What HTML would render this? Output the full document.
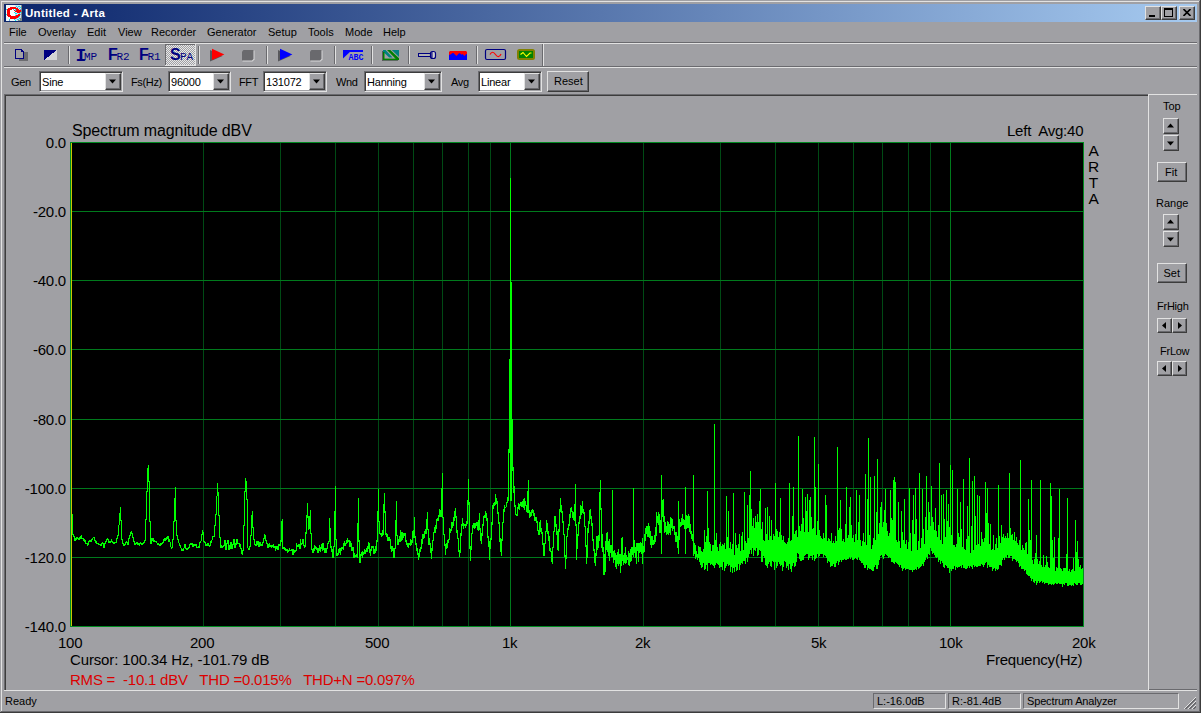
<!DOCTYPE html>
<html><head><meta charset="utf-8"><title>Untitled - Arta</title>
<style>
html,body{margin:0;padding:0}
body{width:1201px;height:713px;overflow:hidden;background:#a0a0a4;position:relative;font-family:"Liberation Sans",sans-serif;font-size:11px;color:#000}
.abs{position:absolute}
.t{position:absolute;white-space:pre;line-height:1}
.hl{position:absolute;height:1px}
.vl{position:absolute;width:1px}
.L{background:#e2e2e2}.S{background:#6a6a6e}.D{background:#3c3c3c}
.btn{position:absolute;background:#a0a0a4;box-sizing:border-box;border:1px solid;border-color:#e2e2e2 #3c3c3c #3c3c3c #e2e2e2;box-shadow:inset -1px -1px 0 #6a6a6e}
.btn span{position:absolute;white-space:pre;line-height:1}
.combo{position:absolute;height:21px;box-sizing:border-box;background:#fff;border:1px solid;border-color:#6a6a6e #e2e2e2 #e2e2e2 #6a6a6e;box-shadow:inset 1px 1px 0 #3c3c3c, inset -1px -1px 0 #a0a0a4}
.combo span{position:absolute;left:2px;top:4.5px;line-height:1;white-space:pre;letter-spacing:-0.2px}
.combo .dd{position:absolute;right:1px;top:1px;width:16px;height:17px}
.pl{font-size:15px;letter-spacing:-0.22px;color:#000}
.menu{top:27px}
</style></head><body>
<!-- window frame -->
<div class="vl L" style="left:1px;top:1px;height:710px"></div>
<div class="hl L" style="left:1px;top:1px;width:1198px"></div>
<div class="vl S" style="left:1199px;top:1px;height:711px"></div>
<div class="hl S" style="left:1px;top:711px;width:1199px"></div>
<div class="vl D" style="left:1200px;top:0;height:713px"></div>
<div class="hl D" style="left:0;top:712px;width:1201px"></div>
<!-- title bar -->
<div class="abs" style="left:4px;top:4px;width:1193px;height:18px;background:linear-gradient(90deg,#0a246a,#a6caf0)"></div>
<svg class="abs" style="left:6px;top:5px" width="16" height="16" viewBox="0 0 16 16" shape-rendering="crispEdges">
<rect width="16" height="16" fill="#eef6fa"/>
<rect x="9" y="0" width="7" height="16" fill="#cfe3ee"/>
<g fill="#7c8a86"><rect x="15" y="0" width="1" height="1"/><rect x="15" y="1" width="1" height="1"/><rect x="15" y="2" width="1" height="1"/><rect x="15" y="3" width="1" height="1"/><rect x="15" y="4" width="1" height="1"/><rect x="15" y="5" width="1" height="1"/><rect x="15" y="6" width="1" height="1"/><rect x="15" y="7" width="1" height="1"/><rect x="15" y="8" width="1" height="1"/><rect x="15" y="9" width="1" height="1"/><rect x="15" y="10" width="1" height="1"/><rect x="15" y="11" width="1" height="1"/><rect x="15" y="12" width="1" height="1"/><rect x="15" y="13" width="1" height="1"/><rect x="15" y="14" width="1" height="1"/><rect x="15" y="15" width="1" height="1"/><rect x="14" y="14" width="1" height="1"/><rect x="13" y="15" width="1" height="1"/><rect x="14" y="15" width="1" height="1"/><rect x="12" y="15" width="1" height="1"/><rect x="14" y="13" width="1" height="1"/></g>
<g fill="#6aa0d8"><rect x="11" y="2" width="1" height="1"/><rect x="13" y="5" width="1" height="1"/><rect x="14" y="9" width="1" height="1"/><rect x="13" y="13" width="1" height="1"/><rect x="11" y="14" width="1" height="1"/><rect x="3" y="15" width="1" height="1"/><rect x="14" y="4" width="1" height="1"/><rect x="13" y="1" width="1" height="1"/><rect x="10" y="13" width="1" height="1"/></g>
<g fill="#00f0f8"><rect x="10" y="1" width="1" height="1"/><rect x="12" y="1" width="1" height="1"/><rect x="13" y="3" width="1" height="1"/><rect x="12" y="4" width="1" height="1"/><rect x="9" y="4" width="1" height="1"/><rect x="7" y="4" width="1" height="1"/><rect x="8" y="6" width="1" height="1"/><rect x="9" y="8" width="1" height="1"/><rect x="10" y="8" width="1" height="1"/><rect x="8" y="10" width="1" height="1"/><rect x="9" y="10" width="1" height="1"/><rect x="14" y="7" width="1" height="1"/><rect x="13" y="8" width="1" height="1"/><rect x="12" y="12" width="1" height="1"/><rect x="13" y="11" width="1" height="1"/><rect x="8" y="14" width="1" height="1"/><rect x="9" y="15" width="1" height="1"/><rect x="12" y="14" width="1" height="1"/><rect x="3" y="14" width="1" height="1"/><rect x="0" y="4" width="1" height="1"/><rect x="0" y="9" width="1" height="1"/><rect x="14" y="2" width="1" height="1"/></g>
<rect x="4" y="4" width="5" height="8" fill="#ffffff"/>
<g fill="#ff0000"><rect x="4" y="2" width="6" height="1"/><rect x="2" y="3" width="10" height="1"/><rect x="1" y="4" width="5" height="1"/><rect x="10" y="4" width="3" height="1"/><rect x="1" y="5" width="3" height="1"/><rect x="8" y="5" width="7" height="1"/><rect x="1" y="6" width="3" height="1"/><rect x="9" y="6" width="6" height="1"/><rect x="1" y="7" width="3" height="1"/><rect x="11" y="7" width="3" height="1"/><rect x="1" y="8" width="3" height="1"/><rect x="1" y="9" width="3" height="1"/><rect x="12" y="9" width="2" height="1"/><rect x="1" y="10" width="4" height="1"/><rect x="10" y="10" width="4" height="1"/><rect x="2" y="11" width="11" height="1"/><rect x="4" y="12" width="8" height="1"/><rect x="4" y="13" width="6" height="1"/></g>
<g fill="#00f0f8"><rect x="7" y="4" width="1" height="1"/><rect x="9" y="5" width="1" height="1"/><rect x="8" y="7" width="1" height="1"/><rect x="10" y="8" width="1" height="1"/><rect x="9" y="10" width="1" height="1"/></g>
</svg>
<div class="t" style="left:25px;top:8px;font-size:11.5px;font-weight:bold;color:#fff;letter-spacing:0.3px">Untitled - Arta</div>
<!-- caption buttons -->
<div class="btn" style="left:1145px;top:6px;width:16px;height:14px"><div class="abs" style="left:3px;top:8px;width:6px;height:2px;background:#000"></div></div>
<div class="btn" style="left:1161px;top:6px;width:16px;height:14px"><div class="abs" style="left:2px;top:1px;width:9px;height:9px;box-sizing:border-box;border:1px solid #000;border-top-width:2px"></div></div>
<div class="btn" style="left:1179px;top:6px;width:16px;height:14px"><svg class="abs" style="left:3px;top:2px" width="8" height="7" viewBox="0 0 8 7"><path d="M0.5 0 L7.5 7 M7.5 0 L0.5 7" stroke="#000" stroke-width="1.6" fill="none"/></svg></div>
<!-- menu -->
<div class="t menu" style="left:9px">File</div>
<div class="t menu" style="left:38px">Overlay</div>
<div class="t menu" style="left:87px">Edit</div>
<div class="t menu" style="left:118px">View</div>
<div class="t menu" style="left:151px">Recorder</div>
<div class="t menu" style="left:207px">Generator</div>
<div class="t menu" style="left:268px">Setup</div>
<div class="t menu" style="left:308px">Tools</div>
<div class="t menu" style="left:345px">Mode</div>
<div class="t menu" style="left:383px">Help</div>
<div class="hl S" style="left:4px;top:42px;width:1193px"></div>
<div class="hl L" style="left:4px;top:43px;width:1193px"></div>
<svg class="abs" style="left:0;top:44px" width="560" height="22" viewBox="0 44 560 22" shape-rendering="crispEdges">
<!-- separators -->
<g fill="#6a6a6e"><rect x="68" y="46" width="1" height="18"/><rect x="198" y="46" width="1" height="18"/><rect x="266" y="46" width="1" height="18"/><rect x="334" y="46" width="1" height="18"/><rect x="371" y="46" width="1" height="18"/><rect x="408" y="46" width="1" height="18"/><rect x="476" y="46" width="1" height="18"/><rect x="542" y="44" width="1" height="22"/></g>
<g fill="#e2e2e2"><rect x="69" y="46" width="1" height="18"/><rect x="199" y="46" width="1" height="18"/><rect x="267" y="46" width="1" height="18"/><rect x="335" y="46" width="1" height="18"/><rect x="372" y="46" width="1" height="18"/><rect x="409" y="46" width="1" height="18"/><rect x="477" y="46" width="1" height="18"/><rect x="543" y="44" width="1" height="22"/></g>
<!-- icon1: page with shadow -->
<rect x="19" y="52" width="9" height="9" fill="#6c6c70"/>
<path d="M15.5 49.5 H21.5 L23.5 51.5 V58.5 H15.5 Z" fill="#a0a0a4" stroke="#000080" stroke-width="1"/>
<path d="M21.5 49.5 V51.5 H23.5" fill="none" stroke="#000080" stroke-width="1"/>
<!-- icon2 -->
<path d="M44 50 H57 L44 60 Z" fill="#000080"/><path d="M57 50 V60 H44 Z" fill="#d4d4d6"/>
<!-- SPA pressed -->
<defs><pattern id="chk" width="2" height="2" patternUnits="userSpaceOnUse"><rect width="2" height="2" fill="#a0a0a4"/><rect width="1" height="1" fill="#e8e8e8"/><rect x="1" y="1" width="1" height="1" fill="#e8e8e8"/></pattern></defs><rect x="166" y="45" width="29" height="20" fill="url(#chk)"/>
<rect x="165" y="44" width="31" height="1" fill="#6a6a6e"/><rect x="165" y="44" width="1" height="22" fill="#6a6a6e"/>
<rect x="195" y="44" width="1" height="22" fill="#e2e2e2"/><rect x="165" y="65" width="31" height="1" fill="#e2e2e2"/>
<!-- red play -->
<path d="M210 50 L222.5 56 L210 61.5 Z" fill="#58585c" shape-rendering="auto"/>
<path d="M212 48.8 L224.4 54.5 L212 60 Z" fill="#ff0000" shape-rendering="auto"/>
<!-- stop 1 -->
<path d="M244 50.5 H254.5 V59.5 L252.5 61.5 H242.5 V52 Z" fill="#d8d8da" shape-rendering="auto"/>
<path d="M243.5 50 H253.5 V59 L252 60.5 H242 V51.5 Z" fill="#69696d" shape-rendering="auto"/>
<!-- blue play -->
<path d="M278 50 L290.5 56 L278 61.5 Z" fill="#58585c" shape-rendering="auto"/>
<path d="M280 48.8 L292.4 54.5 L280 60 Z" fill="#0000ff" shape-rendering="auto"/>
<!-- stop 2 -->
<path d="M312 50.5 H322.5 V59.5 L320.5 61.5 H310.5 V52 Z" fill="#d8d8da" shape-rendering="auto"/>
<path d="M311.5 50 H321.5 V59 L320 60.5 H310 V51.5 Z" fill="#69696d" shape-rendering="auto"/>
<!-- ABC -->
<rect x="343" y="50" width="20" height="2" fill="#0000ff"/><path d="M343 50 H352 L343 58.5 Z" fill="#0000ff" shape-rendering="auto"/>
<text x="348.5" y="60" font-family="Liberation Mono, monospace" font-weight="bold" font-size="8.6" fill="#0000ff" textLength="15" lengthAdjust="spacingAndGlyphs" shape-rendering="auto">ABC</text>
<!-- green triangle icon -->
<g shape-rendering="auto">
<rect x="382" y="51" width="1.2" height="10" fill="#5a5a5e"/><rect x="382" y="60" width="16" height="0.8" fill="#5a5a5e"/>
<path d="M391.8 50 H399 V57 Z" fill="#008080"/>
<path d="M387 50 H390.3 L399 58.2 V60 H396.8 Z" fill="#008000"/>
<path d="M383 50 H385.6 L392.6 57.6 H389.2 L383 51.8 Z" fill="#008080"/>
<rect x="383" y="52" width="1.5" height="8" fill="#008000"/><rect x="383" y="58.6" width="14.5" height="1.5" fill="#008000"/>
</g>
<!-- flashlight -->
<rect x="418.5" y="53.5" width="12" height="3" fill="#b4b4b0" stroke="#000080" stroke-width="1"/>
<rect x="430.5" y="51.5" width="5" height="7" rx="2" fill="#d0d0cc" stroke="#000080" stroke-width="1.2" shape-rendering="auto"/>
<rect x="431.3" y="52" width="1.2" height="6" fill="#000080" shape-rendering="auto"/>
<!-- red/blue -->
<path d="M449 52 L450 51 H466 L467 52 V56 H449 Z" fill="#ff0000" shape-rendering="auto"/>
<path d="M449 55 L450.5 54.5 L452.5 53 L453.5 53 L456.5 56 L459 53.2 L460 53.2 L461.5 54.8 L462.5 54 L464.5 56 L466 54.2 L467 54 V60 H449 Z" fill="#0000ff" shape-rendering="auto"/>
<!-- red sine -->
<rect x="485.5" y="49.5" width="20" height="10" rx="1.5" fill="#a0a0a4" stroke="#000080" stroke-width="1.2" shape-rendering="auto"/>
<path d="M490 54.5 C491.5 51.5 493.5 51.5 495.5 54.5 S499.5 57.5 501 54" fill="none" stroke="#ff0000" stroke-width="1.2" shape-rendering="auto"/>
<!-- green scope -->
<rect x="517" y="49" width="18" height="11" rx="2.5" fill="#808000" shape-rendering="auto"/>
<rect x="519" y="51" width="14" height="7" fill="#008000"/>
<path d="M520.5 54.5 L523 52.5 L526.5 56.5 L530 53 L531.5 53" fill="none" stroke="#ffff00" stroke-width="1.1" shape-rendering="auto"/>
</svg>
<div class="t" style="left:75.5px;top:46.5px;font-family:'Liberation Mono',monospace;font-weight:bold;font-size:18px;color:#000080;width:7px;overflow:visible;letter-spacing:-3px">I</div>
<div class="t" style="left:84px;top:51.5px;font-family:'Liberation Mono',monospace;font-size:11px;color:#000080;letter-spacing:0px">MP</div>
<div class="t" style="left:108px;top:47px;font-weight:bold;font-size:16px;color:#000080">F</div>
<div class="t" style="left:116.5px;top:51.5px;font-family:'Liberation Mono',monospace;font-size:11px;color:#000080;letter-spacing:0px">R2</div>
<div class="t" style="left:139px;top:47px;font-weight:bold;font-size:16px;color:#000080">F</div>
<div class="t" style="left:147.5px;top:51.5px;font-family:'Liberation Mono',monospace;font-size:11px;color:#000080;letter-spacing:0px">R1</div>
<div class="t" style="left:170px;top:46.5px;font-weight:bold;font-size:16px;color:#000080">S</div>
<div class="t" style="left:180px;top:52px;font-family:'Liberation Mono',monospace;font-size:11px;color:#000080;letter-spacing:0px">PA</div>

<div class="hl S" style="left:4px;top:66px;width:1193px"></div>
<div class="hl L" style="left:4px;top:67px;width:1193px"></div>
<div class="t" style="left:11px;top:76.5px;letter-spacing:-0.35px">Gen</div>
<div class="combo" style="left:39px;top:71px;width:84px"><span>Sine</span><div class="btn dd"><svg class="abs" style="left:3px;top:5px" width="8" height="5"><path d="M0 0.5 L7 0.5 L3.5 4.5Z" fill="#000"/></svg></div></div>
<div class="t" style="left:131px;top:76.5px;letter-spacing:-0.35px">Fs(Hz)</div>
<div class="combo" style="left:168px;top:71px;width:63px"><span>96000</span><div class="btn dd"><svg class="abs" style="left:3px;top:5px" width="8" height="5"><path d="M0 0.5 L7 0.5 L3.5 4.5Z" fill="#000"/></svg></div></div>
<div class="t" style="left:239px;top:76.5px;letter-spacing:-0.35px">FFT</div>
<div class="combo" style="left:263px;top:71px;width:64px"><span>131072</span><div class="btn dd"><svg class="abs" style="left:3px;top:5px" width="8" height="5"><path d="M0 0.5 L7 0.5 L3.5 4.5Z" fill="#000"/></svg></div></div>
<div class="t" style="left:336px;top:76.5px;letter-spacing:-0.35px">Wnd</div>
<div class="combo" style="left:364px;top:71px;width:78px"><span>Hanning</span><div class="btn dd"><svg class="abs" style="left:3px;top:5px" width="8" height="5"><path d="M0 0.5 L7 0.5 L3.5 4.5Z" fill="#000"/></svg></div></div>
<div class="t" style="left:451px;top:76.5px;letter-spacing:-0.35px">Avg</div>
<div class="combo" style="left:478px;top:71px;width:64px"><span>Linear</span><div class="btn dd"><svg class="abs" style="left:3px;top:5px" width="8" height="5"><path d="M0 0.5 L7 0.5 L3.5 4.5Z" fill="#000"/></svg></div></div>
<div class="btn" style="left:547px;top:71px;width:42px;height:21px"><span style="left:6px;top:4px">Reset</span></div>

<!-- main sunken panel -->
<div class="hl S" style="left:4px;top:94px;width:1144px"></div>
<div class="hl D" style="left:5px;top:95px;width:1143px"></div>
<div class="vl S" style="left:4px;top:94px;height:597px"></div>
<div class="vl D" style="left:5px;top:95px;height:595px"></div>
<div class="vl L" style="left:1148px;top:94px;height:597px"></div>
<div class="hl L" style="left:4px;top:690px;width:1193px"></div>
<div class="hl L" style="left:1149px;top:94px;width:48px"></div>
<div class="hl S" style="left:1149px;top:689px;width:48px"></div>
<svg class="abs" style="left:0;top:0" width="1201" height="713" shape-rendering="crispEdges">
<rect x="70" y="142" width="1014" height="485" fill="#008a20"/>
<rect x="71" y="143" width="1012" height="483" fill="#000"/>
<rect x="203" y="143" width="1" height="483" fill="#004a14"/><rect x="280" y="143" width="1" height="483" fill="#004a14"/><rect x="335" y="143" width="1" height="483" fill="#004a14"/><rect x="378" y="143" width="1" height="483" fill="#004a14"/><rect x="413" y="143" width="1" height="483" fill="#004a14"/><rect x="442" y="143" width="1" height="483" fill="#004a14"/><rect x="468" y="143" width="1" height="483" fill="#004a14"/><rect x="490" y="143" width="1" height="483" fill="#004a14"/><rect x="510" y="143" width="1" height="483" fill="#007a1c"/><rect x="643" y="143" width="1" height="483" fill="#004a14"/><rect x="720" y="143" width="1" height="483" fill="#004a14"/><rect x="775" y="143" width="1" height="483" fill="#004a14"/><rect x="818" y="143" width="1" height="483" fill="#004a14"/><rect x="853" y="143" width="1" height="483" fill="#004a14"/><rect x="882" y="143" width="1" height="483" fill="#004a14"/><rect x="908" y="143" width="1" height="483" fill="#004a14"/><rect x="930" y="143" width="1" height="483" fill="#004a14"/><rect x="950" y="143" width="1" height="483" fill="#007a1c"/><rect x="72" y="211" width="1011" height="1" fill="#007a1c"/><rect x="72" y="280" width="1011" height="1" fill="#007a1c"/><rect x="72" y="349" width="1011" height="1" fill="#007a1c"/><rect x="72" y="419" width="1011" height="1" fill="#007a1c"/><rect x="72" y="488" width="1011" height="1" fill="#007a1c"/><rect x="72" y="557" width="1011" height="1" fill="#007a1c"/>
<rect x="71" y="143" width="1" height="483" fill="#c8c800"/>
<path d="M72.5 514.4V534.9M73.5 534.0V537.3M74.5 536.4V540.9M75.5 537.8V540.9M76.5 536.5V540.2M77.5 536.5V539.3M78.5 538.3V539.7M79.5 537.1V539.7M80.5 536.2V538.8M81.5 535.3V539.2M82.5 537.6V539.2M83.5 537.7V541.3M84.5 539.1V541.6M85.5 539.8V544.1M86.5 542.7V544.1M87.5 543.1V546.1M88.5 541.3V545.3M89.5 540.0V542.4M90.5 540.0V542.4M91.5 538.7V542.0M92.5 537.5V539.9M93.5 537.0V538.4M94.5 537.0V540.9M95.5 540.0V543.0M96.5 541.1V544.4M97.5 542.7V544.4M98.5 543.1V544.8M99.5 543.9V545.2M100.5 543.9V546.0M101.5 543.4V545.9M102.5 541.8V544.3M103.5 542.9V547.6M104.5 543.0V547.6M105.5 540.8V543.9M106.5 538.6V541.7M107.5 538.4V540.3M108.5 539.4V542.8M109.5 541.2V543.2M110.5 540.8V543.2M111.5 539.1V541.7M112.5 540.5V542.7M113.5 541.5V543.7M114.5 541.8V543.7M115.5 541.8V543.4M116.5 538.4V543.1M117.5 535.0V539.3M118.5 524.5V535.9M119.5 512.5V525.4M120.5 507.0V520.6M121.5 519.7V540.2M122.5 539.3V543.7M123.5 542.6V546.3M124.5 543.5V546.3M125.5 542.1V545.0M126.5 541.1V543.3M127.5 541.8V544.7M128.5 538.0V544.7M129.5 535.0V538.9M130.5 531.6V535.9M131.5 531.1V533.5M132.5 532.6V538.0M133.5 537.1V542.0M134.5 541.1V545.2M135.5 543.2V545.2M136.5 541.7V544.1M137.5 541.7V544.6M138.5 543.4V544.6M139.5 542.9V545.5M140.5 541.9V544.2M141.5 542.7V544.8M142.5 543.1V544.8M143.5 542.1V544.0M144.5 540.3V543.0M145.5 519.1V541.2M146.5 491.1V520.0M147.5 468.4V492.0M148.5 465.0V482.3M149.5 481.4V521.5M150.5 520.6V543.7M151.5 538.3V543.7M152.5 537.8V540.9M153.5 537.8V541.8M154.5 539.9V542.4M155.5 540.5V542.4M156.5 541.0V543.4M157.5 542.5V544.7M158.5 542.7V544.8M159.5 543.9V546.3M160.5 543.3V546.3M161.5 542.6V545.1M162.5 541.9V543.5M163.5 538.5V542.9M164.5 538.4V540.5M165.5 538.3V540.5M166.5 536.9V539.8M167.5 536.4V539.0M168.5 536.4V541.6M169.5 538.5V542.4M170.5 541.5V547.4M171.5 546.5V548.6M172.5 538.9V547.7M173.5 520.6V539.8M174.5 497.9V521.5M175.5 487.0V520.8M176.5 519.9V535.6M177.5 534.7V539.7M178.5 538.8V543.4M179.5 542.5V545.9M180.5 545.0V548.4M181.5 547.5V550.8M182.5 549.1V550.8M183.5 547.5V550.7M184.5 544.4V548.4M185.5 544.4V548.5M186.5 547.6V549.5M187.5 547.6V549.9M188.5 546.9V548.5M189.5 544.2V547.8M190.5 543.2V545.1M191.5 543.0V544.5M192.5 543.0V547.2M193.5 544.1V547.0M194.5 543.5V546.4M195.5 543.5V545.6M196.5 544.4V547.7M197.5 546.6V547.8M198.5 546.3V547.8M199.5 542.2V547.7M200.5 540.5V543.1M201.5 534.0V541.4M202.5 530.0V534.9M203.5 531.9V542.1M204.5 541.2V543.0M205.5 542.1V545.5M206.5 544.0V546.0M207.5 543.4V545.6M208.5 543.1V545.9M209.5 545.0V547.0M210.5 540.9V546.4M211.5 539.5V543.2M212.5 535.9V540.4M213.5 535.7V536.9M214.5 525.4V536.6M215.5 513.7V526.3M216.5 495.5V514.6M217.5 483.0V496.4M218.5 491.8V515.5M219.5 514.6V537.7M220.5 536.8V547.6M221.5 545.1V547.7M222.5 546.4V548.0M223.5 545.0V547.3M224.5 540.0V545.9M225.5 540.0V550.4M226.5 542.9V550.4M227.5 539.7V543.8M228.5 539.7V550.2M229.5 545.3V550.2M230.5 542.3V548.6M231.5 542.3V549.2M232.5 544.3V549.2M233.5 538.7V545.2M234.5 538.7V547.8M235.5 543.1V547.8M236.5 538.7V545.3M237.5 538.7V544.2M238.5 542.9V544.2M239.5 542.9V546.5M240.5 544.3V549.1M241.5 547.8V553.7M242.5 550.4V555.4M243.5 524.7V551.3M244.5 491.4V525.6M245.5 478.0V492.3M246.5 481.0V500.0M247.5 499.1V548.4M248.5 547.5V549.9M249.5 546.1V549.9M250.5 535.4V547.0M251.5 515.4V536.3M252.5 511.0V528.0M253.5 527.1V539.5M254.5 538.6V544.8M255.5 543.9V545.9M256.5 540.6V545.9M257.5 540.6V545.0M258.5 540.8V546.6M259.5 541.8V546.6M260.5 541.6V546.3M261.5 543.9V546.3M262.5 541.6V545.7M263.5 538.0V542.5M264.5 533.7V538.9M265.5 534.8V540.6M266.5 539.7V543.7M267.5 542.8V548.1M268.5 544.4V548.1M269.5 542.8V547.4M270.5 544.8V547.4M271.5 545.2V547.5M272.5 544.6V547.4M273.5 543.8V548.2M274.5 545.5V548.4M275.5 545.5V550.7M276.5 546.3V549.2M277.5 546.3V549.5M278.5 543.6V549.5M279.5 543.6V545.6M280.5 539.8V545.6M281.5 520.5V541.7M282.5 519.0V549.4M283.5 547.2V549.4M284.5 547.2V549.8M285.5 547.6V551.4M286.5 549.3V551.0M287.5 549.3V552.7M288.5 549.8V551.5M289.5 547.9V551.2M290.5 549.8V550.9M291.5 549.1V550.9M292.5 549.3V555.2M293.5 549.3V555.2M294.5 549.7V552.8M295.5 549.9V552.0M296.5 542.9V551.3M297.5 544.9V547.1M298.5 544.2V546.7M299.5 544.2V549.0M300.5 539.2V549.0M301.5 542.9V545.1M302.5 539.2V543.9M303.5 539.4V546.4M304.5 545.2V548.1M305.5 531.9V547.2M306.5 514.8V533.5M307.5 502.9V517.8M308.5 516.3V529.8M309.5 515.8V529.0M310.5 509.7V533.9M311.5 532.7V550.3M312.5 548.8V553.4M313.5 548.4V552.7M314.5 545.4V551.4M315.5 545.7V548.9M316.5 547.3V550.3M317.5 548.0V552.8M318.5 547.6V552.5M319.5 545.2V550.6M320.5 547.1V551.5M321.5 544.4V548.9M322.5 542.9V551.3M323.5 543.2V550.1M324.5 548.2V553.0M325.5 547.6V553.1M326.5 548.3V552.5M327.5 542.6V549.4M328.5 540.8V544.0M329.5 518.0V542.4M330.5 528.3V547.6M331.5 546.2V551.5M332.5 549.2V557.6M333.5 545.5V557.5M334.5 510.7V547.3M335.5 485.9V540.3M336.5 538.8V555.6M337.5 553.1V555.9M338.5 549.1V554.5M339.5 548.0V553.0M340.5 548.4V554.5M341.5 546.6V551.1M342.5 546.6V548.9M343.5 542.7V549.9M344.5 540.7V546.0M345.5 542.9V546.3M346.5 540.3V544.1M347.5 537.6V542.9M348.5 539.8V542.0M349.5 539.7V546.6M350.5 540.7V546.5M351.5 543.2V551.0M352.5 547.0V551.0M353.5 546.8V558.0M354.5 552.7V557.9M355.5 554.5V556.9M356.5 553.8V557.1M357.5 523.4V557.8M358.5 497.9V541.6M359.5 540.4V562.7M360.5 554.3V563.1M361.5 551.9V555.6M362.5 551.2V557.6M363.5 551.5V555.4M364.5 548.5V553.7M365.5 550.0V554.2M366.5 548.3V551.7M367.5 546.4V551.6M368.5 542.0V549.3M369.5 542.6V553.3M370.5 548.9V555.8M371.5 546.2V550.7M372.5 545.6V548.3M373.5 546.2V553.5M374.5 548.8V554.4M375.5 545.8V552.9M376.5 540.3V550.6M377.5 511.4V542.1M378.5 488.6V522.0M379.5 520.6V534.2M380.5 533.2V534.8M381.5 533.2V536.5M382.5 530.1V536.2M383.5 503.8V535.4M384.5 492.5V513.1M385.5 511.0V535.2M386.5 533.4V537.3M387.5 533.9V540.6M388.5 536.8V541.1M389.5 536.9V541.4M390.5 539.3V548.8M391.5 546.4V551.6M392.5 545.8V550.6M393.5 547.7V557.8M394.5 548.2V557.9M395.5 520.1V549.3M396.5 500.7V535.8M397.5 534.6V545.0M398.5 539.1V544.7M399.5 535.6V542.4M400.5 530.3V542.3M401.5 531.5V540.9M402.5 531.9V540.3M403.5 532.5V537.6M404.5 533.3V535.5M405.5 533.2V541.5M406.5 540.3V545.1M407.5 542.9V546.7M408.5 542.5V547.5M409.5 542.7V545.1M410.5 539.4V545.7M411.5 539.7V545.4M412.5 531.0V542.8M413.5 530.3V537.7M414.5 516.6V537.6M415.5 535.8V545.0M416.5 543.0V551.1M417.5 547.6V554.9M418.5 553.3V559.5M419.5 549.0V557.1M420.5 547.3V551.5M421.5 538.5V548.6M422.5 534.0V544.0M423.5 534.3V539.1M424.5 531.1V537.7M425.5 528.7V534.1M426.5 519.1V534.1M427.5 511.5V529.8M428.5 528.5V545.1M429.5 537.9V545.1M430.5 542.7V553.4M431.5 548.2V558.5M432.5 539.7V550.5M433.5 531.8V541.4M434.5 527.2V532.9M435.5 524.9V532.7M436.5 519.2V528.8M437.5 517.7V520.5M438.5 514.8V520.6M439.5 509.2V517.0M440.5 510.3V516.9M441.5 488.0V516.8M442.5 473.4V518.1M443.5 516.5V535.3M444.5 533.6V545.6M445.5 544.1V555.0M446.5 543.1V549.0M447.5 540.1V548.2M448.5 538.5V542.7M449.5 528.0V539.7M450.5 529.2V532.8M451.5 521.6V530.5M452.5 521.6V527.6M453.5 517.4V526.3M454.5 511.4V520.6M455.5 508.1V517.7M456.5 515.5V533.1M457.5 529.7V539.1M458.5 537.8V552.4M459.5 550.4V557.2M460.5 533.3V553.1M461.5 523.8V535.8M462.5 517.8V525.8M463.5 523.2V528.5M464.5 523.6V526.1M465.5 523.8V527.6M466.5 521.2V525.7M467.5 499.7V524.2M468.5 478.7V505.1M469.5 501.8V548.7M470.5 546.1V561.1M471.5 533.1V550.0M472.5 524.6V534.4M473.5 522.7V527.7M474.5 523.0V529.2M475.5 523.4V527.5M476.5 522.0V525.7M477.5 522.1V529.5M478.5 520.2V530.6M479.5 513.3V529.6M480.5 527.8V541.4M481.5 533.2V543.9M482.5 524.3V535.6M483.5 516.3V526.1M484.5 514.9V518.2M485.5 510.6V518.0M486.5 512.8V521.1M487.5 518.1V538.2M488.5 536.4V546.6M489.5 540.9V559.5M490.5 538.0V548.8M491.5 522.3V540.1M492.5 504.7V524.8M493.5 502.5V509.4M494.5 502.4V505.6M495.5 494.4V504.5M496.5 497.7V503.5M497.5 500.9V513.9M498.5 512.2V523.7M499.5 522.0V542.1M500.5 538.0V551.5M501.5 539.4V556.0M502.5 522.0V541.0M503.5 508.7V523.2M504.5 505.2V511.9M505.5 506.5V508.2M506.5 502.3V507.4M507.5 497.0V503.2M508.5 449.0V500.9M509.5 359.0V452.9M510.5 177.5V500.9M511.5 282.0V500.9M512.5 419.0V470.9M513.5 467.0V492.9M514.5 485.7V506.9M515.5 505.0V515.2M516.5 513.9V516.3M517.5 506.8V516.3M518.5 503.3V509.2M519.5 503.5V510.3M520.5 501.8V506.2M521.5 502.1V506.7M522.5 501.1V506.9M523.5 498.7V508.1M524.5 498.1V510.2M525.5 501.1V506.2M526.5 504.6V511.6M527.5 490.6V513.1M528.5 479.9V512.8M529.5 509.9V517.5M530.5 511.8V516.7M531.5 510.4V515.8M532.5 509.1V513.4M533.5 509.6V516.1M534.5 513.1V520.5M535.5 516.5V520.6M536.5 517.1V523.3M537.5 521.4V531.1M538.5 529.6V534.7M539.5 521.8V534.6M540.5 520.0V532.3M541.5 527.8V534.4M542.5 531.7V545.1M543.5 543.2V556.0M544.5 543.2V555.7M545.5 530.5V544.3M546.5 519.9V531.9M547.5 523.0V534.4M548.5 531.2V540.9M549.5 536.0V551.0M550.5 547.5V551.6M551.5 550.5V561.5M552.5 546.7V563.9M553.5 530.6V548.1M554.5 515.8V531.9M555.5 516.0V527.4M556.5 523.9V535.2M557.5 531.3V550.4M558.5 529.4V550.6M559.5 508.9V531.6M560.5 497.6V512.0M561.5 504.9V513.2M562.5 510.7V522.9M563.5 520.9V535.2M564.5 533.8V557.3M565.5 554.9V568.9M566.5 535.6V559.2M567.5 528.4V537.0M568.5 523.9V530.1M569.5 513.9V525.9M570.5 508.3V517.7M571.5 507.4V511.8M572.5 510.6V517.5M573.5 511.9V520.1M574.5 503.7V521.1M575.5 483.8V526.1M576.5 524.0V560.1M577.5 534.4V548.5M578.5 521.6V536.3M579.5 516.1V523.5M580.5 505.1V518.5M581.5 506.2V514.9M582.5 500.5V512.7M583.5 508.8V513.5M584.5 511.9V527.4M585.5 526.1V547.0M586.5 545.1V563.7M587.5 528.4V558.4M588.5 521.0V533.1M589.5 509.8V523.5M590.5 509.1V519.1M591.5 515.6V525.6M592.5 522.8V541.2M593.5 538.6V550.9M594.5 548.8V562.8M595.5 552.6V566.1M596.5 536.1V556.4M597.5 536.1V550.4M598.5 534.5V548.2M599.5 492.0V541.1M600.5 480.0V510.4M601.5 508.1V548.0M602.5 534.0V552.1M603.5 547.4V574.8M604.5 553.5V574.5M605.5 541.1V571.6M606.5 532.5V549.6M607.5 532.0V552.1M608.5 541.2V556.4M609.5 538.6V561.2M610.5 544.8V552.9M611.5 545.0V556.8M612.5 490.0V557.0M613.5 550.6V562.6M614.5 550.4V560.3M615.5 553.1V567.1M616.5 554.9V568.9M617.5 552.2V563.8M618.5 548.6V566.3M619.5 553.7V564.4M620.5 554.3V572.6M621.5 538.3V565.8M622.5 536.6V560.6M623.5 555.0V565.0M624.5 553.2V563.1M625.5 547.0V563.8M626.5 554.8V562.8M627.5 556.5V560.0M628.5 551.4V564.6M629.5 553.4V565.7M630.5 548.9V562.1M631.5 547.2V561.4M632.5 547.3V554.6M633.5 488.0V556.8M634.5 540.4V552.5M635.5 547.3V557.6M636.5 542.5V563.8M637.5 542.6V550.9M638.5 542.5V562.1M639.5 543.4V552.7M640.5 541.5V552.0M641.5 542.5V554.4M642.5 538.0V563.6M643.5 545.6V552.7M644.5 534.3V552.4M645.5 528.4V541.1M646.5 525.6V533.9M647.5 525.5V537.2M648.5 522.9V536.9M649.5 525.7V538.2M650.5 531.1V545.0M651.5 535.8V548.3M652.5 536.2V544.9M653.5 539.5V544.7M654.5 535.0V543.7M655.5 526.5V541.9M656.5 512.0V535.9M657.5 515.7V523.4M658.5 512.0V525.4M659.5 514.1V533.2M660.5 519.8V532.6M661.5 475.0V553.9M662.5 499.7V517.1M663.5 499.1V522.2M664.5 516.4V533.3M665.5 522.0V532.1M666.5 525.7V535.1M667.5 520.8V534.4M668.5 521.5V534.7M669.5 523.8V533.2M670.5 516.7V535.2M671.5 517.8V527.6M672.5 518.8V531.1M673.5 525.6V529.0M674.5 525.5V535.4M675.5 531.5V542.4M676.5 531.7V541.5M677.5 536.3V548.4M678.5 501.0V553.9M679.5 519.0V539.8M680.5 521.7V526.8M681.5 518.4V526.3M682.5 514.3V525.0M683.5 519.0V524.5M684.5 519.6V528.8M685.5 487.0V553.9M686.5 514.7V529.1M687.5 516.0V527.6M688.5 513.9V528.0M689.5 515.7V531.8M690.5 524.3V534.1M691.5 530.8V539.3M692.5 533.9V540.9M693.5 475.0V555.5M694.5 542.7V553.7M695.5 545.2V558.5M696.5 551.1V556.6M697.5 553.7V560.1M698.5 546.0V558.0M699.5 546.7V561.5M700.5 547.1V564.5M701.5 551.0V567.6M702.5 552.3V566.6M703.5 548.7V562.9M704.5 530.4V570.0M705.5 541.9V569.1M706.5 536.2V565.2M707.5 491.0V570.5M708.5 527.6V563.1M709.5 542.3V563.1M710.5 544.0V565.2M711.5 550.8V564.0M712.5 544.6V564.7M713.5 545.4V565.9M714.5 424.0V568.3M715.5 540.0V565.1M716.5 533.4V562.8M717.5 546.5V563.9M718.5 550.6V565.0M719.5 544.1V568.1M720.5 541.7V567.2M721.5 546.2V566.5M722.5 544.4V570.1M723.5 544.5V562.3M724.5 543.4V570.6M725.5 548.5V567.6M726.5 496.0V566.3M727.5 537.1V564.3M728.5 510.7V565.8M729.5 547.6V565.2M730.5 542.1V571.7M731.5 549.0V567.2M732.5 543.9V572.5M733.5 493.0V567.6M734.5 554.6V572.2M735.5 532.8V566.6M736.5 545.4V571.0M737.5 548.3V569.5M738.5 543.6V564.0M739.5 533.7V569.7M740.5 550.6V565.4M741.5 536.1V563.0M742.5 532.3V563.6M743.5 550.0V561.3M744.5 492.0V560.8M745.5 540.5V563.9M746.5 543.3V557.9M747.5 504.5V562.2M748.5 537.7V556.6M749.5 495.0V553.9M750.5 471.0V550.4M751.5 509.3V553.6M752.5 526.3V547.7M753.5 517.9V556.3M754.5 528.2V549.9M755.5 515.7V551.2M756.5 522.0V548.2M757.5 514.4V556.2M758.5 521.7V554.6M759.5 501.2V550.1M760.5 489.0V551.1M761.5 529.4V561.9M762.5 522.4V562.3M763.5 539.8V556.1M764.5 540.6V557.7M765.5 508.0V565.2M766.5 534.0V566.2M767.5 506.9V568.3M768.5 539.9V563.5M769.5 515.8V562.2M770.5 536.4V565.6M771.5 520.4V566.6M772.5 539.9V561.1M773.5 533.9V561.7M774.5 535.7V569.6M775.5 483.0V562.0M776.5 529.1V567.5M777.5 530.6V565.5M778.5 536.9V562.2M779.5 532.3V563.5M780.5 498.0V566.0M781.5 535.1V565.4M782.5 539.8V571.1M783.5 535.7V566.5M784.5 541.5V561.0M785.5 542.9V561.9M786.5 544.4V568.1M787.5 542.2V566.1M788.5 537.5V569.6M789.5 483.0V564.2M790.5 541.2V569.0M791.5 539.7V571.5M792.5 516.3V565.9M793.5 487.0V563.0M794.5 533.9V566.7M795.5 531.3V565.8M796.5 529.6V562.0M797.5 537.4V552.5M798.5 436.0V554.4M799.5 525.6V559.3M800.5 531.2V560.9M801.5 524.3V560.8M802.5 489.0V560.4M803.5 518.4V560.1M804.5 532.3V556.3M805.5 497.3V554.8M806.5 511.0V553.9M807.5 493.8V553.7M808.5 531.6V559.5M809.5 500.4V557.8M810.5 497.0V556.2M811.5 516.6V555.5M812.5 529.2V560.3M813.5 528.2V555.4M814.5 437.0V560.5M815.5 486.6V558.9M816.5 534.9V558.2M817.5 521.2V554.0M818.5 464.0V557.3M819.5 529.8V555.7M820.5 536.2V554.0M821.5 538.4V554.1M822.5 539.1V554.2M823.5 532.5V556.8M824.5 537.7V554.5M825.5 495.0V556.1M826.5 505.1V557.9M827.5 540.6V563.3M828.5 537.9V561.2M829.5 538.5V562.2M830.5 541.0V567.1M831.5 532.6V565.6M832.5 543.0V566.0M833.5 540.6V563.6M834.5 543.2V566.8M835.5 535.6V567.4M836.5 541.0V563.2M837.5 447.0V561.4M838.5 530.0V564.5M839.5 528.3V561.7M840.5 500.0V560.2M841.5 529.0V561.7M842.5 540.9V560.4M843.5 539.4V559.6M844.5 541.6V558.5M845.5 523.7V559.8M846.5 487.0V559.9M847.5 538.0V559.0M848.5 535.2V558.5M849.5 507.3V557.4M850.5 497.0V558.6M851.5 524.7V557.4M852.5 537.7V559.5M853.5 534.9V560.3M854.5 541.6V558.8M855.5 533.7V557.7M856.5 490.0V559.1M857.5 539.9V560.4M858.5 521.8V557.4M859.5 495.0V559.6M860.5 540.1V560.8M861.5 545.5V562.5M862.5 540.5V562.7M863.5 532.5V564.9M864.5 542.2V568.0M865.5 473.5V568.0M866.5 545.0V565.3M867.5 499.3V569.7M868.5 438.0V568.3M869.5 535.4V568.6M870.5 477.0V568.8M871.5 549.4V570.1M872.5 545.3V570.7M873.5 537.9V570.6M874.5 475.7V567.1M875.5 540.4V565.4M876.5 511.7V568.7M877.5 459.0V569.4M878.5 534.3V564.5M879.5 523.4V559.6M880.5 506.7V555.9M881.5 501.7V554.9M882.5 526.6V557.1M883.5 522.4V559.2M884.5 510.4V555.5M885.5 489.0V553.7M886.5 522.6V555.0M887.5 531.4V556.3M888.5 536.0V558.4M889.5 533.1V556.7M890.5 490.0V557.5M891.5 518.4V561.7M892.5 520.1V561.8M893.5 480.0V563.3M894.5 477.0V563.5M895.5 482.0V562.1M896.5 540.3V563.0M897.5 541.6V563.9M898.5 502.0V565.4M899.5 541.2V566.5M900.5 547.5V564.9M901.5 511.0V567.7M902.5 531.5V570.9M903.5 539.6V569.4M904.5 499.0V568.3M905.5 544.0V570.1M906.5 540.2V569.2M907.5 548.6V569.2M908.5 542.4V568.7M909.5 487.5V570.2M910.5 533.2V570.1M911.5 551.1V570.3M912.5 519.5V571.5M913.5 495.0V569.5M914.5 534.4V570.0M915.5 487.5V568.6M916.5 519.3V570.1M917.5 550.4V567.4M918.5 540.5V568.9M919.5 473.0V568.4M920.5 547.5V567.2M921.5 537.5V565.7M922.5 489.0V564.3M923.5 529.0V565.9M924.5 543.9V561.9M925.5 517.1V560.3M926.5 475.7V557.2M927.5 529.7V558.9M928.5 502.0V553.5M929.5 512.4V554.5M930.5 526.4V548.1M931.5 485.5V550.8M932.5 517.0V554.4M933.5 521.7V552.5M934.5 529.8V555.1M935.5 508.0V556.5M936.5 530.7V558.0M937.5 536.7V557.4M938.5 525.2V561.9M939.5 463.0V559.6M940.5 540.4V564.1M941.5 495.0V560.5M942.5 544.4V563.4M943.5 494.0V566.6M944.5 519.4V567.6M945.5 537.1V565.0M946.5 490.0V565.9M947.5 521.2V567.5M948.5 504.0V567.6M949.5 526.9V573.4M950.5 465.0V568.8M951.5 535.4V570.7M952.5 470.0V569.1M953.5 544.5V568.9M954.5 544.7V566.3M955.5 546.9V570.3M956.5 543.7V567.1M957.5 489.0V568.2M958.5 532.7V567.3M959.5 536.5V566.8M960.5 502.0V565.5M961.5 528.6V567.6M962.5 547.4V564.8M963.5 479.0V568.2M964.5 549.4V567.7M965.5 550.2V568.9M966.5 538.7V568.6M967.5 506.0V568.0M968.5 536.4V566.3M969.5 458.0V567.9M970.5 552.6V566.4M971.5 525.6V566.9M972.5 481.0V568.7M973.5 550.2V565.2M974.5 475.7V567.1M975.5 516.3V566.3M976.5 544.8V567.1M977.5 495.0V567.4M978.5 544.0V566.0M979.5 496.0V565.7M980.5 545.9V566.3M981.5 531.8V564.4M982.5 539.4V565.0M983.5 542.1V566.6M984.5 537.8V565.2M985.5 481.5V563.1M986.5 512.8V562.4M987.5 488.0V567.5M988.5 523.0V564.6M989.5 543.7V566.9M990.5 524.0V567.2M991.5 549.9V567.1M992.5 548.6V571.1M993.5 535.4V568.6M994.5 549.5V568.4M995.5 543.8V571.0M996.5 537.7V568.7M997.5 547.7V570.2M998.5 485.0V568.7M999.5 536.4V564.6M1000.5 542.8V565.0M1001.5 525.2V565.8M1002.5 537.4V559.7M1003.5 534.0V557.8M1004.5 537.7V559.6M1005.5 536.1V557.4M1006.5 537.9V557.9M1007.5 533.2V555.2M1008.5 538.2V558.3M1009.5 473.0V558.2M1010.5 528.2V556.1M1011.5 535.3V556.3M1012.5 534.3V561.2M1013.5 539.8V558.9M1014.5 532.3V558.9M1015.5 540.9V560.4M1016.5 536.8V562.4M1017.5 543.4V560.5M1018.5 544.5V563.3M1019.5 540.4V566.8M1020.5 460.0V565.9M1021.5 549.8V569.2M1022.5 545.2V568.7M1023.5 548.4V568.8M1024.5 550.0V571.2M1025.5 543.3V569.9M1026.5 542.1V573.6M1027.5 553.5V575.1M1028.5 499.0V575.5M1029.5 530.4V576.4M1030.5 539.8V577.7M1031.5 480.0V580.5M1032.5 560.4V578.5M1033.5 564.1V582.0M1034.5 558.5V582.9M1035.5 552.5V580.5M1036.5 535.3V585.1M1037.5 559.4V582.7M1038.5 563.8V581.4M1039.5 560.8V583.2M1040.5 480.0V581.8M1041.5 564.9V581.4M1042.5 567.4V582.9M1043.5 554.9V582.3M1044.5 566.9V583.6M1045.5 565.1V582.8M1046.5 555.6V583.0M1047.5 562.0V582.8M1048.5 567.0V584.6M1049.5 568.3V583.9M1050.5 482.5V583.5M1051.5 496.0V584.6M1052.5 539.8V583.5M1053.5 557.7V585.1M1054.5 537.4V583.8M1055.5 570.7V582.6M1056.5 567.2V584.2M1057.5 567.8V583.8M1058.5 537.5V582.8M1059.5 488.5V584.1M1060.5 568.4V584.2M1061.5 569.2V584.2M1062.5 570.5V587.0M1063.5 568.3V584.3M1064.5 567.5V585.4M1065.5 567.9V582.7M1066.5 554.4V583.3M1067.5 497.6V586.3M1068.5 570.9V586.4M1069.5 569.3V584.7M1070.5 571.6V585.1M1071.5 569.6V585.7M1072.5 569.1V584.6M1073.5 557.6V585.7M1074.5 570.7V583.4M1075.5 519.5V584.3M1076.5 551.9V584.6M1077.5 541.0V584.6M1078.5 558.6V582.5M1079.5 567.0V583.0M1080.5 565.3V585.3M1081.5 568.5V584.8M1082.5 567.5V583.9" stroke="#00ff00" stroke-width="1" fill="none"/>
</svg>
<div class="t pl" style="left:72px;top:123px;font-size:16px;letter-spacing:-0.12px">Spectrum magnitude dBV</div>
<div class="t pl" style="left:1007px;top:122.5px">Left  Avg:40</div>
<div class="t pl" style="right:1135px;top:134.6px;text-align:right">0.0</div>
<div class="t pl" style="right:1135px;top:203.6px">-20.0</div>
<div class="t pl" style="right:1135px;top:272.6px">-40.0</div>
<div class="t pl" style="right:1135px;top:341.6px">-60.0</div>
<div class="t pl" style="right:1135px;top:411.6px">-80.0</div>
<div class="t pl" style="right:1135px;top:480.6px">-100.0</div>
<div class="t pl" style="right:1135px;top:549.6px">-120.0</div>
<div class="t pl" style="right:1135px;top:618.6px">-140.0</div>
<div class="t pl" style="left:58px;top:634.5px">100</div>
<div class="t pl" style="left:190px;top:634.5px">200</div>
<div class="t pl" style="left:365px;top:634.5px">500</div>
<div class="t pl" style="left:502px;top:634.5px">1k</div>
<div class="t pl" style="left:635px;top:634.5px">2k</div>
<div class="t pl" style="left:811px;top:634.5px">5k</div>
<div class="t pl" style="left:939px;top:634.5px">10k</div>
<div class="t pl" style="left:1072px;top:634.5px">20k</div>
<div class="t pl" style="left:70px;top:652px;letter-spacing:-0.14px">Cursor: 100.34 Hz, -101.79 dB</div>
<div class="t pl" style="left:986px;top:652px">Frequency(Hz)</div>
<div class="t pl" style="left:70px;top:672px;color:#dc0000">RMS =  -10.1 dBV   THD =0.015%   THD+N =0.097%</div>
<div class="t pl" style="left:1088px;top:143px;font-size:15.5px;line-height:16px;white-space:pre;text-align:center">A
R
T
A</div>

<div class="t" style="left:1163px;top:101px">Top</div>
<div class="btn" style="left:1163px;top:118px;width:16px;height:16px"><svg class="abs" style="left:3px;top:4px" width="8" height="5"><path d="M0 4.5 L3.5 0.5 L7 4.5Z" fill="#000"/></svg></div>
<div class="btn" style="left:1163px;top:135px;width:16px;height:16px"><svg class="abs" style="left:3px;top:5px" width="8" height="5"><path d="M0 0.5 L7 0.5 L3.5 4.5Z" fill="#000"/></svg></div>
<div class="btn" style="left:1157px;top:162px;width:30px;height:20px"><span style="left:7px;top:4px">Fit</span></div>
<div class="t" style="left:1156px;top:198px">Range</div>
<div class="btn" style="left:1163px;top:214px;width:16px;height:16px"><svg class="abs" style="left:3px;top:4px" width="8" height="5"><path d="M0 4.5 L3.5 0.5 L7 4.5Z" fill="#000"/></svg></div>
<div class="btn" style="left:1163px;top:231px;width:16px;height:16px"><svg class="abs" style="left:3px;top:5px" width="8" height="5"><path d="M0 0.5 L7 0.5 L3.5 4.5Z" fill="#000"/></svg></div>
<div class="btn" style="left:1157px;top:263px;width:30px;height:20px"><span style="left:5.5px;top:4px">Set</span></div>
<div class="t" style="left:1157px;top:301px;letter-spacing:-0.25px">FrHigh</div>
<div class="btn" style="left:1157px;top:318px;width:15px;height:15px"><svg class="abs" style="left:4px;top:3px" width="4" height="7"><path d="M4 0 L4 7 L0 3.5Z" fill="#000"/></svg></div>
<div class="btn" style="left:1172px;top:318px;width:15px;height:15px"><svg class="abs" style="left:5px;top:3px" width="4" height="7"><path d="M0 0 L0 7 L4 3.5Z" fill="#000"/></svg></div>
<div class="t" style="left:1160px;top:346px;letter-spacing:-0.25px">FrLow</div>
<div class="btn" style="left:1157px;top:361px;width:15px;height:15px"><svg class="abs" style="left:4px;top:3px" width="4" height="7"><path d="M4 0 L4 7 L0 3.5Z" fill="#000"/></svg></div>
<div class="btn" style="left:1172px;top:361px;width:15px;height:15px"><svg class="abs" style="left:5px;top:3px" width="4" height="7"><path d="M0 0 L0 7 L4 3.5Z" fill="#000"/></svg></div>

<div class="t" style="left:5px;top:696px">Ready</div>
<div class="abs" style="left:873px;top:693px;width:73px;height:16px;box-sizing:border-box;border:1px solid;border-color:#6a6a6e #e2e2e2 #e2e2e2 #6a6a6e"></div>
<div class="t" style="left:877px;top:696px">L:-16.0dB</div>
<div class="abs" style="left:948px;top:693px;width:73px;height:16px;box-sizing:border-box;border:1px solid;border-color:#6a6a6e #e2e2e2 #e2e2e2 #6a6a6e"></div>
<div class="t" style="left:952px;top:696px">R:-81.4dB</div>
<div class="abs" style="left:1023px;top:693px;width:156px;height:16px;box-sizing:border-box;border:1px solid;border-color:#6a6a6e #e2e2e2 #e2e2e2 #6a6a6e"></div>
<div class="t" style="left:1027px;top:696px;letter-spacing:-0.15px">Spectrum Analyzer</div>
<svg class="abs" style="left:1183px;top:696px" width="14" height="14" shape-rendering="crispEdges"><path d="M13 1 L1 13 M13 5 L5 13 M13 9 L9 13" stroke="#e2e2e2" stroke-width="1" fill="none" shape-rendering="auto"/><path d="M13 2 L2 13 M13 3 L3 13 M13 6 L6 13 M13 7 L7 13 M13 10 L10 13 M13 11 L11 13" stroke="#6a6a6e" stroke-width="1" fill="none" shape-rendering="auto"/></svg>

</body></html>
